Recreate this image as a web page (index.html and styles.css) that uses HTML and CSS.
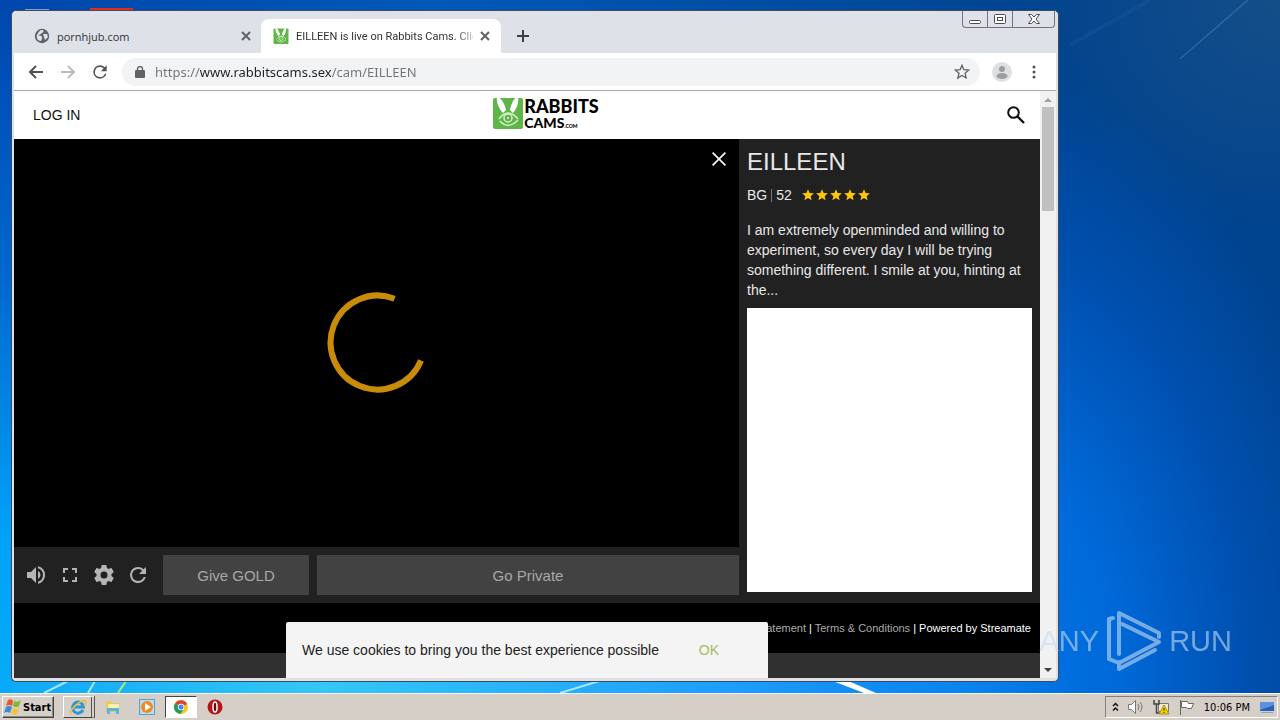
FILE: index.html
```html
<!DOCTYPE html>
<html lang="en">
<head>
<meta charset="utf-8">
<meta name="viewport" content="width=device-width, initial-scale=1">
<title>EILLEEN is live on Rabbits Cams</title>
<link rel="stylesheet" href="styles.css">
</head>
<body>
<svg width="0" height="0" class="defs" aria-hidden="true">
  <symbol id="bunny" viewBox="0 0 30 32">
    <rect y="1" width="30" height="31" rx="2" fill="#5fb548"/>
    <path d="M4 0C7-1 12 7 13 13l-3 3C6 12 3 5 4 0zM25 0c-3-1-7 7-8 13l3 3c4-4 6-11 5-16z" fill="#fff"/>
    <path d="M6 22q9-12 19 0" fill="none" stroke="#d5f0cc" stroke-width="1.500"/>
    <circle cx="15" cy="21" r="4" fill="none" stroke="#d5f0cc" stroke-width="1.500"/>
    <circle cx="15" cy="21" r="1" fill="#e9f8e4"/>
    <path d="M7 24q8 9 18-1" fill="none" stroke="#d5f0cc" stroke-width="1.500"/>
  </symbol>
  <symbol id="close" viewBox="0 0 10 10"><path d="M1 1l8 8M9 1L1 9" fill="none" stroke="currentColor"/></symbol>
  <symbol id="star" viewBox="0 0 24 24"><path d="M12 17.3L18.2 21l-1.6-7L22 9.2l-7.2-.6L12 2 9.200 8.600 2 9.200l5.500 4.800L5.800 21z"/></symbol>
  <symbol id="reload" viewBox="0 0 24 24"><path fill="currentColor" d="M17.650 6.350A7.960 7.960 0 0 0 12 4a8 8 0 1 0 7.730 10h-2.080A6 6 0 1 1 12 6c1.660 0 3.140.69 4.220 1.780L13 11h7V4z"/></symbol>
</svg>
<main class="desktop">
  <svg class="rays" viewBox="0 0 1280 693" preserveAspectRatio="none" aria-hidden="true">
    <path d="M90 8h43v3H90z" fill="#e02b20"/><path d="M25 9h24v2H25z" fill="#7f9fd0"/>
    <path d="M1248 0L1180 59" stroke="#5a8ec2" stroke-width="1.500" opacity=".4"/>
    <path d="M1150 0L1070 45" stroke="#3a75b5" stroke-width="4" opacity=".15"/>
    <path d="M44 693l24-12M88 693l7-12M560 693l46-14" stroke="#a8e6ff" stroke-width="2"/>
    <path d="M118 693l8-12" stroke="#b6e878" stroke-width="2"/>
    <path d="M830 680l34 13h12l-30-13z" fill="#fff"/>
  </svg>
  <section class="window">
    <header class="tabs">
      <div class="tab">
        <svg class="fav" viewBox="0 0 16 16"><circle cx="8" cy="8" r="7.200" fill="#5f6368"/><path d="M8 2c2 0 2 2 0 3S6 7 4 7l3 1c2 1 1 3 0 5-3 0-5-3-4-6 1-3 3-5 5-5zM9 6h4l1 3-3 3-1-3z" fill="#dee1e8"/></svg>
        <span class="tab-title">pornhjub.com</span>
        <button class="bare" aria-label="Close tab"><svg class="heavy" width="10" height="10"><use href="#close"/></svg></button>
      </div>
      <div class="tab active">
        <svg class="fav"><use href="#bunny"/></svg>
        <span class="tab-title fade">EILLEEN is live on Rabbits Cams. Clic</span>
        <button class="bare" aria-label="Close tab"><svg class="heavy" width="10" height="10"><use href="#close"/></svg></button>
      </div>
      <button class="bare new-tab" aria-label="New tab"><svg width="12" height="12" viewBox="0 0 12 12"><path d="M6 0v12M0 6h12" stroke="#3c4043" stroke-width="2"/></svg></button>
      <div class="wctl">
        <button aria-label="Minimize"><svg width="12" height="12" viewBox="0 0 12 12"><rect x=".5" y="7.500" width="11" height="3" rx="1" fill="#fff" stroke="#4a4a55"/></svg></button>
        <button aria-label="Maximize"><svg width="12" height="12" viewBox="0 0 12 12"><rect x=".5" y="1.500" width="11" height="9" rx="1" fill="#fff" stroke="#4a4a55"/><rect x="3.500" y="4.500" width="5" height="3" fill="#fff" stroke="#4a4a55"/></svg></button>
        <button aria-label="Close"><svg width="12" height="12" viewBox="0 0 12 12"><path d="M.5 1.500h3L6 4l2.500-2.500h3L8 6l3.500 4.500h-3L6 8l-2.500 2.500h-3L4 6z" fill="#fff" stroke="#4a4a55"/></svg></button>
      </div>
    </header>
    <nav class="toolbar">
      <button class="bare" aria-label="Back"><svg width="16" height="16" viewBox="0 0 16 16"><path d="M15 8H2M8 2L2 8l6 6" fill="none" stroke="#505357" stroke-width="2"/></svg></button>
      <button class="bare" aria-label="Forward"><svg width="16" height="16" viewBox="0 0 16 16"><path d="M1 8h13M8 2l6 6-6 6" fill="none" stroke="#babcbe" stroke-width="2"/></svg></button>
      <button class="bare dark" aria-label="Reload"><svg width="20" height="20"><use href="#reload"/></svg></button>
      <div class="omni">
        <svg width="10" height="12" viewBox="0 0 10 12"><rect y="4" width="10" height="8" rx="1" fill="#5f6368"/><path d="M2.500 5V3a2.500 2.500 0 0 1 5 0v2" fill="none" stroke="#5f6368" stroke-width="1.400"/></svg>
        <input class="url" type="text" aria-label="Address" value="https://www.rabbitscams.sex/cam/EILLEEN">
        <svg width="16" height="16" viewBox="0 0 24 24" fill="none" stroke="#5f6368" stroke-width="2"><use href="#star"/></svg>
      </div>
      <button class="bare profile" aria-label="Profile"><svg width="20" height="20" viewBox="0 0 20 20"><circle cx="10" cy="10" r="10" fill="#dedfe1"/><circle cx="10" cy="7" r="3" fill="#9c9c9e"/><ellipse cx="10" cy="14" rx="5.500" ry="3" fill="#9c9c9e"/></svg></button>
      <button class="bare" aria-label="Menu"><svg width="4" height="14" viewBox="0 0 4 14" fill="#505357"><circle cx="2" cy="2" r="1.500"/><circle cx="2" cy="7" r="1.500"/><circle cx="2" cy="12" r="1.500"/></svg></button>
    </nav>
    <div class="viewport">
      <div class="page">
        <header class="site-head">
          <a class="login" href="#">LOG IN</a>
          <a class="logo" href="#" aria-label="Rabbits Cams">
            <svg width="30" height="32"><use href="#bunny"/></svg>
            <span class="brand"><span class="b1">RABBITS</span><span class="b2">CAMS<small>.COM</small></span></span>
          </a>
          <button class="bare search" aria-label="Search"><svg width="18" height="18" viewBox="0 0 18 18" fill="none" stroke="#111"><circle cx="6.500" cy="6.500" r="5.300" stroke-width="2"/><path d="M10.500 10.500l6.500 6.500" stroke-width="2.400"/></svg></button>
        </header>
        <div class="show">
          <div class="player">
            <div class="video">
              <svg width="102" height="102" viewBox="0 0 102 102"><path d="M68.600 6.700A47 47 0 1 0 95 68.500" fill="none" stroke="#c88c08" stroke-width="6"/></svg>
              <button class="bare video-close" aria-label="Close video"><svg width="16" height="16"><use href="#close"/></svg></button>
            </div>
            <div class="controls">
              <div class="icons">
                <button class="bare" aria-label="Volume"><svg width="24" height="24" viewBox="0 0 24 24" fill="currentColor"><path d="M3 9v6h4l5 5V4L7 9zm13.500 3A4.500 4.500 0 0 0 14 8v8a4.500 4.500 0 0 0 2.500-4zM14 3.200v2.100a7 7 0 0 1 0 13.400v2.100a9 9 0 0 0 0-17.600z"/></svg></button>
                <button class="bare" aria-label="Full screen"><svg width="24" height="24" viewBox="0 0 24 24" fill="currentColor"><path d="M7 14H5v5h5v-2H7zm-2-4h2V7h3V5H5zm12 7h-3v2h5v-5h-2zM14 5v2h3v3h2V5z"/></svg></button>
                <button class="bare" aria-label="Settings"><svg width="24" height="24" viewBox="0 0 24 24" fill="currentColor"><path d="M19.430 12.980a7.800 7.800 0 0 0 0-1.960l2.110-1.650a.5.5 0 0 0 .12-.64l-2-3.460a.5.5 0 0 0-.61-.22l-2.490 1a7.300 7.300 0 0 0-1.690-.98l-.38-2.650A.49.490 0 0 0 14 2h-4a.49.490 0 0 0-.49.420l-.38 2.650c-.61.250-1.170.590-1.690.980l-2.490-1a.5.5 0 0 0-.61.220l-2 3.460a.5.5 0 0 0 .12.640l2.110 1.650a7.900 7.900 0 0 0 0 1.960l-2.110 1.650a.5.5 0 0 0-.12.640l2 3.460c.12.220.390.300.610.220l2.490-1c.52.400 1.080.730 1.690.980l.38 2.650c.3.240.240.420.49.420h4c.25 0 .46-.18.490-.42l.38-2.650c.61-.25 1.170-.59 1.690-.98l2.490 1c.23.090.490 0 .61-.22l2-3.460a.5.5 0 0 0-.12-.64zM12 15.500a3.500 3.500 0 1 1 0-7 3.500 3.500 0 0 1 0 7z"/></svg></button>
                <button class="bare" aria-label="Refresh"><svg width="24" height="24"><use href="#reload"/></svg></button>
              </div>
              <button class="cta gold">Give GOLD</button>
              <button class="cta private">Go Private</button>
            </div>
          </div>
          <aside class="info">
            <h1>EILLEEN</h1>
            <div class="stats"><span>BG</span><i></i><span>52</span>
              <svg class="stars" width="70" height="14" viewBox="0 0 70 14" fill="#fdc60b" aria-label="5 stars"><use href="#star" width="14" height="14"/><use href="#star" x="14" width="14" height="14"/><use href="#star" x="28" width="14" height="14"/><use href="#star" x="42" width="14" height="14"/><use href="#star" x="56" width="14" height="14"/></svg>
            </div>
            <p>I am extremely openminded and willing to experiment, so every day I will be trying something different. I smile at you, hinting at the...</p>
            <div class="chat"></div>
          </aside>
        </div>
        <footer class="site-foot"><a href="#">Privacy Statement</a> | <a href="#">Terms &amp; Conditions</a> | Powered by Streamate</footer>
        <div class="cookie"><span>We use cookies to bring you the best experience possible</span><button class="bare ok">OK</button></div>
      </div>
      <div class="scroll">
        <svg width="16" height="16" viewBox="0 0 16 16"><path d="M4 11l4-4 4 4z" fill="#a3a3a3"/></svg>
        <div class="thumb"></div>
        <svg class="down" width="16" height="16" viewBox="0 0 16 16"><path d="M4 6l4 4 4-4z" fill="#404040"/></svg>
      </div>
    </div>
  </section>
  <div class="mark">
    <span>ANY</span>
    <svg width="56" height="62" viewBox="0 0 56 62" fill="none" stroke="currentColor" stroke-width="4" stroke-linejoin="round" stroke-linecap="round"><path d="M7 8L3 9v40l10 4 40-21L16 14M13 44V3l40 20v4M13 52v7l36-19"/></svg>
    <span>RUN</span>
  </div>
</main>
<footer class="taskbar">
  <button class="start"><svg width="18" height="18" viewBox="0 0 18 18"><path d="M4 2q4-2 5 1L8 8q-3-2-6 0z" fill="#e8562a"/><path d="M10 3q4 2 7-1l-2 6q-3 2-6 0z" fill="#7dbb36"/><path d="M2 9q3-2 6 0l-2 6q-3-2-6 0z" fill="#3c8ad8"/><path d="M9 10q3 2 6 0l-2 6q-3 2-6-1z" fill="#f6c52c"/></svg>Start</button>
  <div class="apps">
    <button class="app raised stack" aria-label="Internet Explorer"><svg width="18" height="18" viewBox="0 0 18 18" fill="none"><path d="M14 12a5.500 5.500 0 1 1 .5-3H5" stroke="#2a95d9" stroke-width="3"/><path d="M2 16C-1 13 12 1 16 3q2 1-1 5" stroke="#efbd35" stroke-width="1.500"/></svg></button>
    <button class="app" aria-label="Explorer"><svg width="16" height="16" viewBox="0 0 16 16"><path d="M1 2h5l1 2h7v9H1z" fill="#e9c95d"/><path d="M3 5h11v6H3z" fill="#fff1a8"/><path d="M2 15V9h12v6h-3v-3H5v3z" fill="#58b6df"/></svg></button>
    <button class="app" aria-label="Media Player"><svg width="16" height="16" viewBox="0 0 16 16"><rect x=".5" y=".5" width="15" height="15" fill="#b9dcf6" stroke="#5a9bd0"/><circle cx="8" cy="8" r="6" fill="#f08a1c"/><path d="M6 4l6 4-6 4z" fill="#fff"/></svg></button>
    <button class="app pressed" aria-label="Chrome"><svg width="14" height="14" viewBox="0 0 14 14"><circle cx="7" cy="7" r="7" fill="#f5c629"/><path d="M7 7L1 3.500a7 7 0 0 1 12.200.5z" fill="#dc4437"/><path d="M7 7H7L1 3.400A7 7 0 0 0 6.500 14l3-5z" fill="#209b58"/><circle cx="7" cy="7" r="3.200" fill="#fff"/><circle cx="7" cy="7" r="2.500" fill="#4285f4"/></svg></button>
    <button class="app" aria-label="Opera"><svg width="16" height="16" viewBox="0 0 16 16"><circle cx="8" cy="8" r="7.500" fill="#b81318"/><ellipse cx="8" cy="8" rx="2" ry="5" fill="#6d0508" stroke="#fff" stroke-width="1.500"/></svg></button>
  </div>
  <div class="tray">
    <svg width="7" height="10" viewBox="0 0 7 10" fill="none" stroke="#111" stroke-width="1.500"><path d="M1 4l2.500-2.500L6 4M1 8.500L3.500 6 6 8.500"/></svg>
    <svg width="16" height="14" viewBox="0 0 16 14" fill="#fff" stroke="#777"><path d="M.5 4.500h3l4-4v13l-4-4h-3z"/><path d="M10 4q2 3 0 6M12 2q4 5 0 10" fill="none"/></svg>
    <svg width="17" height="16" viewBox="0 0 17 16"><path d="M5.500 4.500h10v8h-10z" fill="#ece8d8" stroke="#777"/><path d="M1 1v4h5V1M3.500 5v9h3" fill="none" stroke="#444" stroke-width="1.500"/><path d="M11 6l5 9H6z" fill="#f8d100" stroke="#b59100"/><path d="M11 9v3M11 13v1" stroke="#222"/></svg>
    <svg width="16" height="15" viewBox="0 0 16 15" fill="#fff" stroke="#666"><path d="M1.500 0v15M2.500 1.500h6l1 2h5l-2 5h-4l-1-1h-5z"/></svg>
    <time>10:06 PM</time>
    <svg width="15" height="13" viewBox="0 0 15 13"><path d="M1 1h14v9H1z" fill="#2860c0"/><path d="M1 1h14v3L1 9z" fill="#5b91df"/><path d="M2 11h12v1H2z" fill="#8aa"/></svg>
  </div>
</footer>
</body>
</html>
```
FILE: styles.css
```css
* { box-sizing: border-box; }
body { margin: 0; height: 100vh; display: flex; flex-direction: column; overflow: hidden; font-family: "Liberation Sans", Arial, sans-serif; font-size: 14px; }
button, input { font: inherit; }
svg { display: block; flex: none; }
a { color: inherit; text-decoration: none; }
.defs { position: absolute; }
.bare { border: 0; padding: 0; background: none; color: inherit; }
.heavy { stroke-width: 2; }

.desktop { flex: 1; min-height: 0; position: relative; background:
  linear-gradient(90deg, #0046ad, #0058b8 40%, #00458c00) 0 0 / 84% 11px no-repeat,
  linear-gradient(#0046ad, #0068cf 40%, #00a2fa 78%, #08aaf8) 0 0 / 12px 100% no-repeat,
  linear-gradient(90deg, #0ca8f8, #34c6f6 30%, #1a9cff 70%, #0080f000) 0 100% / 84% 12px no-repeat,
  radial-gradient(ellipse 260px 240px at 100% 0, #154e88, #154e8800),
  radial-gradient(ellipse 440px 680px at 960px 680px, #0078e8, #006ada 35%, #0050b0 65%, #00438e 92%);
}
.rays { position: absolute; inset: 0; width: 100%; height: 100%; fill: none; }

.window { position: absolute; top: 10px; right: 221px; bottom: 11px; left: 11px; display: flex; flex-direction: column; border: 1px solid #3c4c60; border-radius: 5px; padding: 0 2px 3px; background: #e0e0e3; overflow: hidden; }
.tabs { height: 42px; display: flex; align-items: flex-end; background: #dee1e8; font-family: "Open Sans", "Noto Sans", sans-serif; font-size: 11px; color: #303336; }
.tab { width: 247px; height: 34px; display: flex; align-items: center; gap: 7px; padding: 0 10px 0 20px; }
.tab.active { width: 240px; padding: 0 11px 0 12px; background: #fff; border-radius: 8px 8px 0 0; }
.fav { width: 16px; height: 16px; }
.tab-title { flex: 1; overflow: hidden; white-space: nowrap; }
.active .tab-title { font-family: Roboto, sans-serif; }
.fade { mask-image: linear-gradient(90deg, #000 90%, #0004); }
.tab .bare { color: #5f6368; }
.new-tab { align-self: center; margin: 8px 0 0 16px; }
.wctl { margin-left: auto; margin-right: 1px; align-self: flex-start; display: flex; height: 17px; border: 1px solid #74747e; border-top: 0; border-radius: 0 0 4px 4px; }
.wctl button { width: 25px; padding: 0; border: 0; border-right: 1px solid #74747e; background: none; display: flex; justify-content: center; align-items: center; }
.wctl button:last-child { width: 41px; border: 0; }

.toolbar { height: 38px; display: flex; align-items: center; gap: 14px; padding: 0 20px 0 14px; background: #fff; border-bottom: 1px solid #aaa; }
.toolbar > .bare:first-child { margin-right: 2px; }
.dark { color: #505357; }
.omni { flex: 1; height: 28px; display: flex; align-items: center; gap: 8px; padding: 0 10px 0 13px; border-radius: 14px; background: #f1f3f4; margin: 0 -2px; }
.profile { margin-right: 6px; }
.url { flex: 1; min-width: 0; border: 0; padding: 0; margin-left: 2px; font-family: "Noto Sans", sans-serif; font-size: 13px; color: transparent; background: linear-gradient(90deg, #70757a 45px, #202124 45px, #202124 177px, #70757a 177px); background-clip: text; -webkit-background-clip: text; }

.viewport { flex: 1; min-height: 0; display: flex; }
.page { flex: 1; min-width: 0; position: relative; overflow: hidden; background: #303030; }
.scroll { width: 16px; display: flex; flex-direction: column; background: #f1f1f1; }
.thumb { height: 104px; margin: 0 2px; background: #c1c1c1; }
.down { margin-top: auto; }
.site-head { height: 48px; display: grid; grid-template-columns: 1fr auto 1fr; align-items: center; padding: 0 15px 0 19px; background: #fff; color: #111; }
.logo { display: flex; gap: 1px; margin-left: 34px; }
.brand { display: flex; flex-direction: column; font-family: Lato, sans-serif; font-weight: 900; color: #000; }
.b1 { font-size: 18px; line-height: 19px; }
.b2 { font-size: 14px; line-height: 14px; }
.b2 small { font-size: 5px; }
.search { justify-self: end; }
.show { display: grid; grid-template-columns: 1fr 301px; background: #212121; }
.player { display: flex; flex-direction: column; }
.video { position: relative; height: 408px; display: flex; align-items: center; justify-content: center; background: #000; }
.video-close { position: absolute; top: 12px; right: 12px; color: #fff; }
.controls { display: flex; gap: 8px; padding: 8px 0; }
.icons { width: 141px; display: flex; align-items: center; gap: 10px; padding-left: 10px; color: #b5b5b5; }
.cta { height: 40px; border: 0; background: #424242; color: #a8a8a8; font-size: 15px; }
.gold { width: 146px; }
.private { flex: 1; }
.info { padding: 8px; color: #e8e8e8; }
.info h1 { margin: 0; font-size: 24px; line-height: 30px; font-weight: 400; }
.stats { display: flex; align-items: center; height: 20px; margin-top: 8px; gap: 4px; }
.stats i { width: 1px; height: 13px; background: #777; }
.stars { margin-left: 5px; }
.info p { margin: 15px 0 8px; line-height: 20px; }
.chat { height: 284px; background: #fff; }
.site-foot { height: 50px; padding: 0 9px; background: #000; color: #fff; font-size: 11px; line-height: 50px; text-align: right; }
.site-foot a { color: #aaa; }
.cookie { position: absolute; bottom: 0; left: 50%; transform: translateX(-50%); width: 482px; height: 56px; display: flex; align-items: center; justify-content: space-between; padding: 0 49px 0 16px; border-radius: 2px 2px 0 0; background: #f4f4f4; color: #222; white-space: nowrap; }
.ok { color: #a2bd5a; }

.mark { position: absolute; right: 48px; bottom: 21px; display: flex; align-items: center; gap: 7px; color: #c5dbf3; opacity: .6; font-size: 29px; line-height: 62px; }

.taskbar { height: 27px; display: flex; align-items: center; padding: 2px; background: #d6cfc7; border-top: 1px solid #fff; }
.start { display: flex; align-items: center; gap: 1px; height: 22px; width: 52px; padding: 0 1px; background: #d6cfc7; border: 1px solid; border-color: #fff #444 #444 #fff; box-shadow: inset -1px -1px #8b867e; font-family: "DejaVu Sans Condensed", sans-serif; font-weight: 700; font-size: 11px; }
.apps { display: flex; gap: 2px; margin-left: 9px; }
.app { width: 32px; height: 22px; padding: 0; display: flex; align-items: center; justify-content: center; background: none; border: 1px solid transparent; }
.raised { border-color: #fff #444 #444 #fff; }
.stack { border-right: 4px double #555; }
.pressed { background: #fff; border-color: #444 #fff #fff #444; }
.tray { margin-left: auto; height: 22px; display: flex; align-items: center; gap: 9px; padding: 0 3px 0 6px; border: 1px solid; border-color: #85807a #fff #fff #85807a; font-family: "DejaVu Sans Condensed", sans-serif; font-size: 11px; }
```
